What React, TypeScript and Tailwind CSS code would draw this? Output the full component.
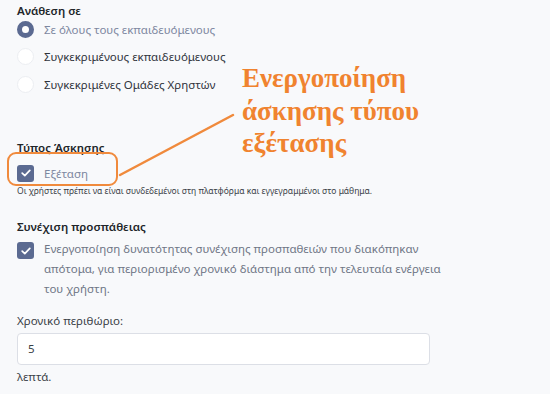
import React from "react";

const Check = () => (
  <svg width="10" height="8" viewBox="0 0 10 8" fill="none">
    <path d="M1.2 4.2 L3.8 6.6 L8.8 1.4" stroke="white" strokeWidth="1.7" strokeLinecap="round" strokeLinejoin="round" />
  </svg>
);

const CheckBox = () => (
  <span className="flex h-[17px] w-[17px] shrink-0 items-center justify-center rounded-[3px] bg-[#5b6a91]">
    <Check />
  </span>
);

export default function App() {
  return (
    <div
      className="relative h-[394px] w-[550px] overflow-hidden bg-[#f8f9fb] px-[17px] text-[#2b2f36]"
      style={{ fontFamily: "'Noto Sans', 'Open Sans', sans-serif" }}
    >
      <div className="pt-[3px] text-[11.5px] font-semibold leading-[16px] text-[#212529]">Ανάθεση σε</div>
      <div className="mt-[2px] flex flex-col gap-[10px]">
        <label className="flex items-center gap-[10px]">
          <span className="h-[17px] w-[17px] shrink-0 rounded-full border-[5px] border-[#5b6a91] bg-white" />
          <span className="text-[11.5px] text-[#7d87a0]">Σε όλους τους εκπαιδευόμενους</span>
        </label>
        <label className="flex items-center gap-[10px]">
          <span className="h-[17px] w-[17px] shrink-0 rounded-full border border-[#eceef2] bg-white" />
          <span className="text-[11.5px] text-[#30343b]">Συγκεκριμένους εκπαιδευόμενους</span>
        </label>
        <label className="flex items-center gap-[10px]">
          <span className="h-[17px] w-[17px] shrink-0 rounded-full border border-[#eceef2] bg-white" />
          <span className="text-[11.5px] text-[#30343b]">Συγκεκριμένες Ομάδες Χρηστών</span>
        </label>
      </div>

      <div className="mt-[47px] text-[11.5px] font-semibold leading-[16px] text-[#212529]">Τύπος Άσκησης</div>
      <label className="mt-[9px] flex items-center gap-[10px]">
        <CheckBox />
        <span className="text-[11.5px] text-[#7d87a0]">Εξέταση</span>
      </label>
      <div className="mt-[2px] text-[8.5px] leading-[14px] text-[#3a3f47]">
        Οι χρήστες πρέπει να είναι συνδεδεμένοι στη πλατφόρμα και εγγεγραμμένοι στο μάθημα.
      </div>

      <div className="mt-[21px] text-[11.5px] font-semibold leading-[16px] text-[#212529]">Συνέχιση προσπάθειας</div>
      <div className="mt-[4px] flex items-start gap-[10px]">
        <div className="pt-[3px]">
          <CheckBox />
        </div>
        <div className="w-[420px] text-[11.5px] leading-[20px] text-[#6f7686]">
          Ενεργοποίηση δυνατότητας συνέχισης προσπαθειών που διακόπηκαν
          <br />
          απότομα, για περιορισμένο χρονικό διάστημα από την τελευταία ενέργεια
          <br />
          του χρήστη.
        </div>
      </div>

      <div className="mt-[14px] text-[11.5px] leading-[16px] text-[#3a3f47]">Χρονικό περιθώριο:</div>
      <div className="mt-[4px] flex h-[32px] w-[413px] items-center rounded-[4px] border border-[#dcdfe6] bg-white px-[10px] text-[11.5px] text-[#3a3f47]">
        5
      </div>
      <div className="mt-[4px] text-[11.5px] leading-[16px] text-[#3a3f47]">λεπτά.</div>

      {/* annotation overlay */}
      <div className="pointer-events-none absolute left-[7px] top-[152px] h-[34px] w-[111px] rounded-[9px] border-[2.5px] border-[#f08a3c]" />
      <svg className="pointer-events-none absolute left-0 top-0" width="550" height="394">
        <line x1="120" y1="175" x2="233" y2="115" stroke="#f08a3c" strokeWidth="2.5" strokeLinecap="round" />
      </svg>
      <div
        className="pointer-events-none absolute left-[242px] top-[62px] text-[27px] font-bold leading-[32.5px] text-[#f0832f]"
        style={{ fontFamily: "'Liberation Serif', 'DejaVu Serif', serif" }}
      >
        <div>Ενεργοποίηση</div>
        <div>άσκησης τύπου</div>
        <div>εξέτασης</div>
      </div>
    </div>
  );
}
